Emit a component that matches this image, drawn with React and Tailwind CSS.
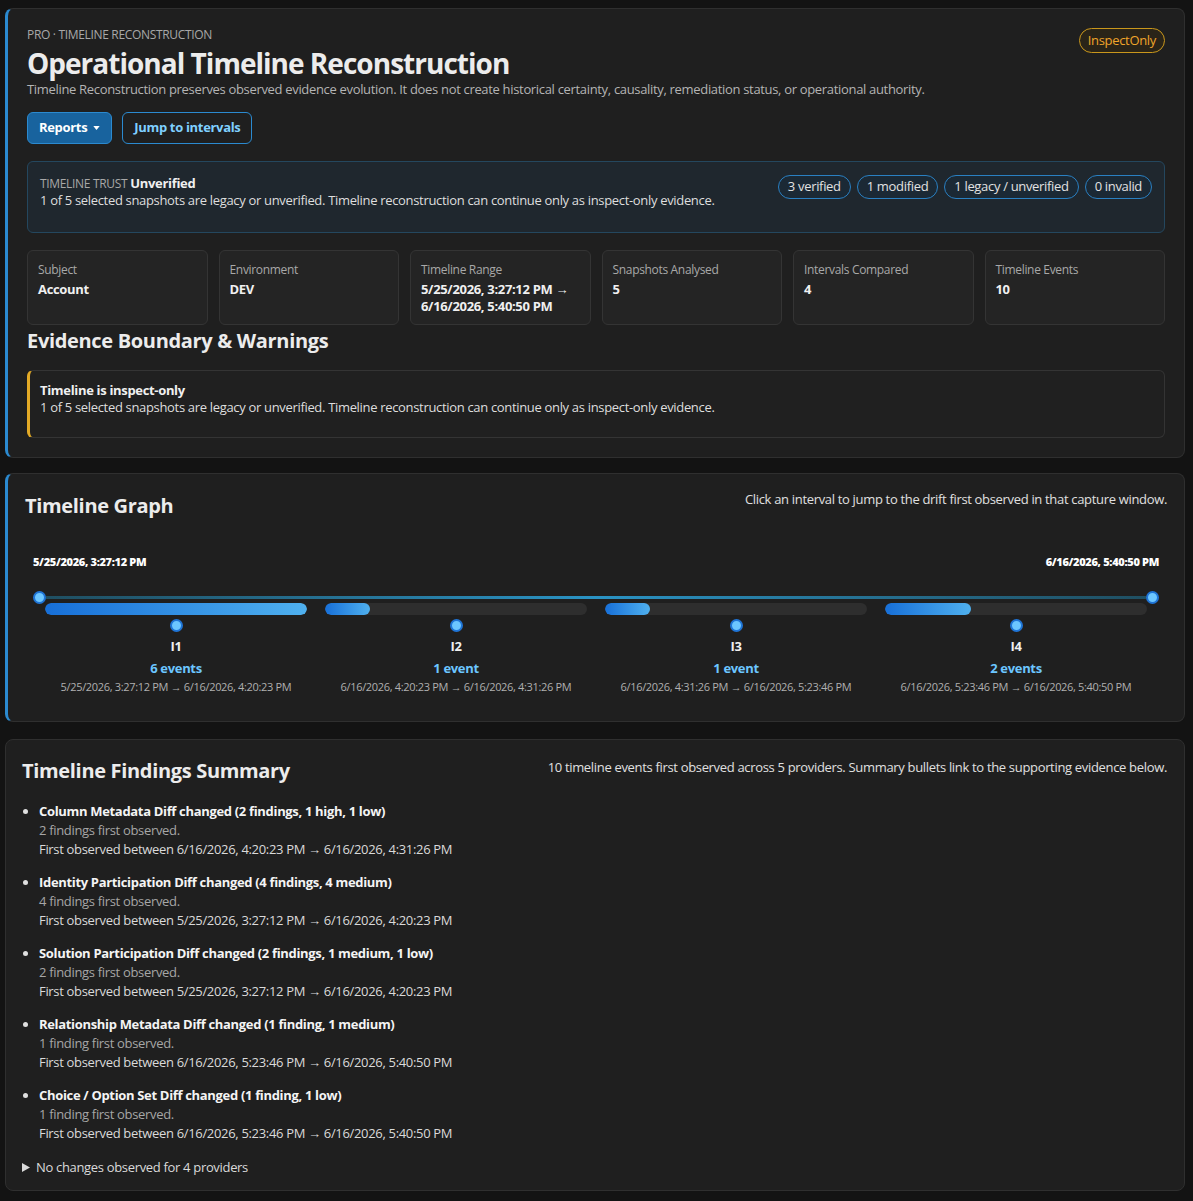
import React from 'react';

// Operational timeline reconstruction view (dark, inspect-only)

const stats = [
  { label: 'Subject', value: 'Account' },
  { label: 'Environment', value: 'DEV' },
  { label: 'Timeline Range', value: '5/25/2026, 3:27:12 PM →\n6/16/2026, 5:40:50 PM' },
  { label: 'Snapshots Analysed', value: '5' },
  { label: 'Intervals Compared', value: '4' },
  { label: 'Timeline Events', value: '10' },
];

const intervals = [
  { id: 'I1', events: '6 events', fill: '100%', range: '5/25/2026, 3:27:12 PM → 6/16/2026, 4:20:23 PM' },
  { id: 'I2', events: '1 event', fill: '17%', range: '6/16/2026, 4:20:23 PM → 6/16/2026, 4:31:26 PM' },
  { id: 'I3', events: '1 event', fill: '17%', range: '6/16/2026, 4:31:26 PM → 6/16/2026, 5:23:46 PM' },
  { id: 'I4', events: '2 events', fill: '33%', range: '6/16/2026, 5:23:46 PM → 6/16/2026, 5:40:50 PM' },
];

const findings = [
  { title: 'Column Metadata Diff changed (2 findings, 1 high, 1 low)', sub: '2 findings first observed.', when: '6/16/2026, 4:20:23 PM → 6/16/2026, 4:31:26 PM' },
  { title: 'Identity Participation Diff changed (4 findings, 4 medium)', sub: '4 findings first observed.', when: '5/25/2026, 3:27:12 PM → 6/16/2026, 4:20:23 PM' },
  { title: 'Solution Participation Diff changed (2 findings, 1 medium, 1 low)', sub: '2 findings first observed.', when: '5/25/2026, 3:27:12 PM → 6/16/2026, 4:20:23 PM' },
  { title: 'Relationship Metadata Diff changed (1 finding, 1 medium)', sub: '1 finding first observed.', when: '6/16/2026, 5:23:46 PM → 6/16/2026, 5:40:50 PM' },
  { title: 'Choice / Option Set Diff changed (1 finding, 1 low)', sub: '1 finding first observed.', when: '6/16/2026, 5:23:46 PM → 6/16/2026, 5:40:50 PM' },
];

function Dot() {
  return <div className="w-[13px] h-[13px] rounded-full bg-[#6cc6ff] border-2 border-[#1f74d6] shrink-0" />;
}

export default function App() {
  return (
    <div className="min-h-screen bg-[#131313] text-[#e6e6e6] pt-2 pb-2 pl-[5px] pr-[8px] font-['Segoe_UI','Open_Sans',sans-serif] text-[13px] tracking-[-0.025em]">

      {/* Header panel */}
      <section className="bg-[#1f1f1f] border border-[#2f2f2f] border-l-[3px] border-l-[#2b8ad0] rounded-lg pt-[18px] pb-[19px] pl-[19px] pr-[19px]">
        <div className="flex items-start justify-between">
          <div>
            <div className="text-[12px] leading-4 uppercase text-[#a8a8a8]">PRO · Timeline Reconstruction</div>
            <h1 className="text-[28px] leading-[34px] font-bold text-[#ececec] mt-[3px] tracking-[-0.035em]">Operational Timeline Reconstruction</h1>
            <p className="leading-[18px] text-[#b4b4b4]">Timeline Reconstruction preserves observed evidence evolution. It does not create historical certainty, causality, remediation status, or operational authority.</p>
          </div>
          <span className="mt-[1px] px-2 h-[25px] flex items-center rounded-full border border-[#c9971c] bg-[#2a2418] text-[#f0a52a]">InspectOnly</span>
        </div>

        <div className="flex gap-[10px] mt-[14px]">
          <button className="h-8 px-[11px] rounded-md bg-[#18639e] border border-[#2b8ad0] text-white font-bold flex items-center gap-[6px]">
            Reports
            <svg width="7" height="4" viewBox="0 0 8 5"><path d="M0 0h8L4 5z" fill="#fff" /></svg>
          </button>
          <button className="h-8 px-[11px] rounded-md border border-[#2b8ad0] text-[#7fd0ff] font-bold">Jump to intervals</button>
        </div>

        <div className="mt-[17px] h-[72px] rounded-md bg-[#1f272e] border border-[#24475e] px-3 pt-[13px] flex justify-between">
          <div className="leading-[17px]">
            <div><span className="uppercase text-[12px] text-[#a8a8a8]">Timeline Trust</span> <span className="font-bold text-[#f0f0f0]">Unverified</span></div>
            <div className="text-[#dedede]">1 of 5 selected snapshots are legacy or unverified. Timeline reconstruction can continue only as inspect-only evidence.</div>
          </div>
          <div className="flex gap-[6px] h-6">
            {['3 verified', '1 modified', '1 legacy / unverified', '0 invalid'].map((p) => (
              <span key={p} className="px-[9px] flex items-center rounded-full border border-[#2a80c2] bg-[#1b2935] text-[#e2e2e2]">{p}</span>
            ))}
          </div>
        </div>

        <div className="grid grid-cols-6 gap-[11px] mt-[17px]">
          {stats.map((s) => (
            <div key={s.label} className="h-[75px] rounded-md bg-[#242424] border border-[#343434] px-[10px] pt-[11px]">
              <div className="text-[12px] leading-4 text-[#a8a8a8]">{s.label}</div>
              <div className="mt-[3px] font-bold leading-[17px] text-[#f0f0f0] whitespace-pre-line">{s.value}</div>
            </div>
          ))}
        </div>

        <h2 className="text-[20px] leading-[26px] font-bold text-[#ececec] mt-[3px]">Evidence Boundary &amp; Warnings</h2>

        <div className="mt-4 h-[68px] rounded-md border border-[#343434] border-l-[3px] border-l-[#e3aa26] bg-[#202020] pl-[10px] pt-[11px] leading-[17px]">
          <div className="font-bold text-[#f0f0f0]">Timeline is inspect-only</div>
          <div className="text-[#dedede]">1 of 5 selected snapshots are legacy or unverified. Timeline reconstruction can continue only as inspect-only evidence.</div>
        </div>
      </section>

      {/* Timeline graph */}
      <section className="mt-[15px] bg-[#1f1f1f] border border-[#2f2f2f] border-l-[3px] border-l-[#2b8ad0] rounded-lg pt-[18px] pb-[27px] pl-[17px] pr-[17px]">
        <div className="flex justify-between items-start">
          <h2 className="text-[20px] leading-[26px] font-bold text-[#ececec] mt-[1px]">Timeline Graph</h2>
          <p className="text-[#e0e0e0] leading-[18px] -mt-[2px]">Click an interval to jump to the drift first observed in that capture window.</p>
        </div>

        <div className="px-2 mt-[36px]">
          <div className="flex justify-between text-[11px] leading-[14px] font-extrabold text-white">
            <span>5/25/2026, 3:27:12 PM</span>
            <span>6/16/2026, 5:40:50 PM</span>
          </div>

          <div className="flex items-center mt-[22px]">
            <Dot />
            <div className="flex-1 h-[3px] bg-gradient-to-r from-[#1f4f62] via-[#2a93c4] to-[#1f4f62]" />
            <Dot />
          </div>

          <div className="grid grid-cols-4 gap-[18px] px-3 -mt-[1px]">
            {intervals.map((iv) => (
              <div key={iv.id} className="flex flex-col items-center">
                <div className="w-full h-3 rounded-full bg-[#2e2e2e] overflow-hidden">
                  <div className="h-full rounded-full bg-gradient-to-r from-[#176fd8] to-[#4fb0ee]" style={{ width: iv.fill }} />
                </div>
                <div className="mt-[4px]"><Dot /></div>
                <div className="mt-[6px] font-bold leading-[17px] text-[#f0f0f0]">{iv.id}</div>
                <div className="mt-[5px] font-bold leading-[17px] text-[#6cc6ff]">{iv.events}</div>
                <div className="mt-[3px] text-[11px] leading-[14px] text-[#b0b0b0]">{iv.range}</div>
              </div>
            ))}
          </div>
        </div>
      </section>

      {/* Findings summary */}
      <section className="mt-[17px] bg-[#1f1f1f] border border-[#2f2f2f] rounded-lg pt-[18px] pb-[14px] pl-[16px] pr-[17px]">
        <div className="flex justify-between items-start">
          <h2 className="text-[20px] leading-[26px] font-bold text-[#ececec]">Timeline Findings Summary</h2>
          <p className="text-[#e0e0e0] leading-[18px]">10 timeline events first observed across 5 providers. Summary bullets link to the supporting evidence below.</p>
        </div>

        <ul className="list-disc pl-[17px] mt-[18px] space-y-[14px] marker:text-[#e0e0e0]">
          {findings.map((f) => (
            <li key={f.title} className="leading-[19px]">
              <div className="font-bold text-[#f4f4f4]">{f.title}</div>
              <div className="text-[#a6a6a6]">{f.sub}</div>
              <div className="text-[#dadada]">First observed between {f.when}</div>
            </li>
          ))}
        </ul>

        <div className="mt-[15px] flex items-center gap-[6px] text-[#dadada] leading-[18px]">
          <svg width="8" height="9" viewBox="0 0 8 9"><path d="M0 0l8 4.5L0 9z" fill="#dadada" /></svg>
          No changes observed for 4 providers
        </div>
      </section>
    </div>
  );
}
